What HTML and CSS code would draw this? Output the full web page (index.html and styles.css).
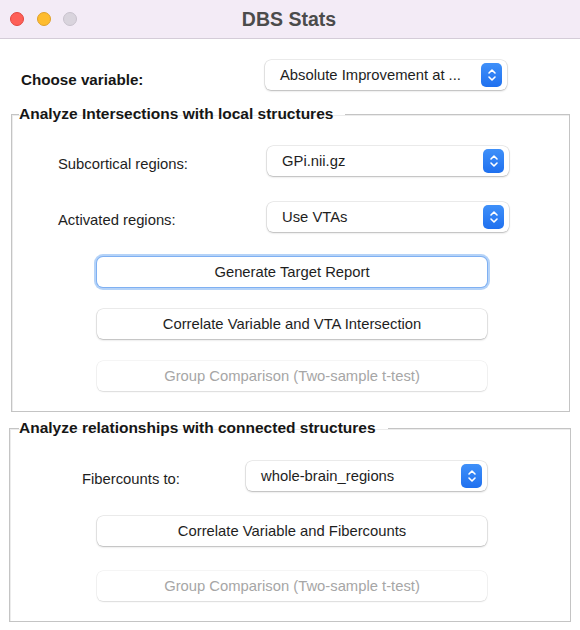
FILE: index.html
```html
<!DOCTYPE html>
<html>
<head>
<meta charset="utf-8">
<title>DBS Stats</title>
<link rel="stylesheet" href="styles.css">
</head>
<body>
<div class="window">
  <div class="titlebar">
    <div class="lights">
      <span class="light red"></span>
      <span class="light yellow"></span>
      <span class="light gray"></span>
    </div>
    <div class="title">DBS Stats</div>
    <div></div>
  </div>

  <div class="choose-row">
    <div class="choose-label">Choose variable:</div>
    <div class="popup w242">
      <span class="popup-text">Absolute Improvement at ...</span>
      <span class="stepper"><svg width="10" height="16" viewBox="0 0 10 16"><path d="M2 6 L5 3 L8 6 M2 10 L5 13 L8 10" fill="none" stroke="#fff" stroke-width="1.6" stroke-linecap="round" stroke-linejoin="round"/></svg></span>
    </div>
  </div>

  <fieldset class="group g1">
    <legend>Analyze Intersections with local structures</legend>
    <div class="form-row r-sub">
      <div class="row-label l209">Subcortical regions:</div>
      <div class="popup w242">
        <span class="popup-text">GPi.nii.gz</span>
        <span class="stepper"><svg width="10" height="16" viewBox="0 0 10 16"><path d="M2 6 L5 3 L8 6 M2 10 L5 13 L8 10" fill="none" stroke="#fff" stroke-width="1.6" stroke-linecap="round" stroke-linejoin="round"/></svg></span>
      </div>
    </div>
    <div class="form-row r-act">
      <div class="row-label l209">Activated regions:</div>
      <div class="popup w242">
        <span class="popup-text">Use VTAs</span>
        <span class="stepper"><svg width="10" height="16" viewBox="0 0 10 16"><path d="M2 6 L5 3 L8 6 M2 10 L5 13 L8 10" fill="none" stroke="#fff" stroke-width="1.6" stroke-linecap="round" stroke-linejoin="round"/></svg></span>
      </div>
    </div>
    <div class="buttons b1">
      <div class="btn focus">Generate Target Report</div>
      <div class="btn">Correlate Variable and VTA Intersection</div>
      <div class="btn disabled">Group Comparison (Two-sample t-test)</div>
    </div>
  </fieldset>

  <fieldset class="group g2">
    <legend>Analyze relationships with connected structures</legend>
    <div class="form-row r-fib">
      <div class="row-label l164">Fibercounts to:</div>
      <div class="popup w241">
        <span class="popup-text">whole-brain_regions</span>
        <span class="stepper"><svg width="10" height="16" viewBox="0 0 10 16"><path d="M2 6 L5 3 L8 6 M2 10 L5 13 L8 10" fill="none" stroke="#fff" stroke-width="1.6" stroke-linecap="round" stroke-linejoin="round"/></svg></span>
      </div>
    </div>
    <div class="buttons b2">
      <div class="btn">Correlate Variable and Fibercounts</div>
      <div class="btn disabled">Group Comparison (Two-sample t-test)</div>
    </div>
  </fieldset>
</div>
</body>
</html>
```

FILE: styles.css
```css
html, body {
  margin: 0;
  padding: 0;
}
body {
  width: 580px;
  height: 630px;
  overflow: hidden;
  background: #ffffff;
  font-family: "Liberation Sans", Arial, sans-serif;
  font-size: 14.8px;
  color: #1e1e1e;
}
.window {
  width: 580px;
  height: 630px;
  background: #ffffff;
}
.titlebar {
  height: 38px;
  background: #f3ebf6;
  border-bottom: 1px solid #d4ccd8;
  display: grid;
  grid-template-columns: 1fr auto 1fr;
  align-items: center;
}
.lights {
  display: flex;
  gap: 12.5px;
  padding-left: 10px;
}
.light {
  width: 14px;
  height: 14px;
  border-radius: 50%;
  box-sizing: border-box;
}
.red { background: #fe5f57; border: 1px solid #e2463f; }
.yellow { background: #febc2e; border: 1px solid #dfa02a; }
.gray { background: #d9d4dd; border: 1px solid #c8c2cd; }
.title {
  font-weight: bold;
  font-size: 19.5px;
  color: #4b4b4b;
  padding-right: 2px;
}

.choose-row {
  display: flex;
  align-items: center;
  margin-top: 20px;
  padding-left: 21px;
  padding-top: 1px;
}
.choose-label {
  width: 244px;
  font-weight: bold;
  font-size: 15.2px;
  padding-top: 8px;
  color: #161616;
}

.popup {
  height: 30px;
  box-sizing: border-box;
  background: #ffffff;
  border-radius: 6px;
  box-shadow: 0 0 0 0.5px rgba(0,0,0,0.14), 0 1px 2px rgba(0,0,0,0.22);
  display: flex;
  align-items: center;
  justify-content: space-between;
  padding: 0 5px 0 15px;
}
.w242 { width: 242px; }
.w241 { width: 241px; }
.popup-text {
  color: #1e1e1e;
}
.stepper {
  width: 21px;
  height: 24px;
  border-radius: 5px;
  background: linear-gradient(#3f90f9, #1f70ef);
  display: flex;
  align-items: center;
  justify-content: center;
}

.group {
  border: 1px solid #c4c4c4;
  box-shadow: inset 1px 1px 0 #ececec;
  padding: 0;
  min-width: 0;
}
.group legend {
  font-weight: bold;
  font-size: 15.5px;
  line-height: 18px;
  padding: 0 12px 0 0;
  color: #161616;
}
.g1 {
  margin: 15px 10px 0 11px;
  padding-bottom: 20px;
}
.g1 legend { margin-left: 7px; }
.g2 {
  margin: 7px 9px 0 9px;
  padding-bottom: 20px;
}
.g2 legend { margin-left: 9px; }

.form-row {
  display: flex;
  align-items: center;
}
.row-label { padding-top: 6px; }
.r-sub { margin-top: 23px; padding-left: 46px; }
.r-act { margin-top: 26px; padding-left: 46px; }
.l209 { width: 209px; }
.r-fib { margin-top: 24px; padding-left: 72px; }
.l164 { width: 164px; }

.buttons {
  display: flex;
  flex-direction: column;
}
.b1 { margin-top: 25px; padding-left: 85px; gap: 22px; }
.b2 { margin-top: 25px; padding-left: 87px; gap: 25px; }

.btn {
  width: 390px;
  height: 30px;
  box-sizing: border-box;
  background: #ffffff;
  border-radius: 6px;
  box-shadow: 0 0 0 0.5px rgba(0,0,0,0.14), 0 1px 2px rgba(0,0,0,0.22);
  display: flex;
  align-items: center;
  justify-content: center;
  color: #1e1e1e;
}
.btn.focus {
  box-shadow: 0 0 0 1px #7fb0f2, 0 0 0 3px #b5d3f8;
}
.btn.disabled {
  color: #a6a6a6;
  box-shadow: 0 0 0 0.5px rgba(0,0,0,0.08), 0 1px 1.5px rgba(0,0,0,0.1);
}
```
